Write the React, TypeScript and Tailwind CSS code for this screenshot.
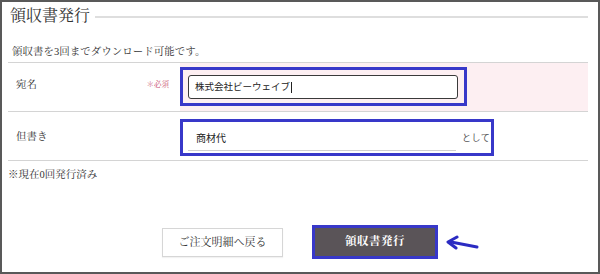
import React from "react";

const serif = { fontFamily: '"Liberation Serif", "Noto Serif CJK JP", "Noto Sans CJK JP", serif' };
const sans = { fontFamily: '"Noto Sans CJK JP", "Noto Sans", sans-serif' };

export default function App() {
  return (
    <div className="w-[600px] h-[274px] border-2 border-[#595959] bg-white pl-[6px] pr-[10px] text-[#333]" style={serif}>
      {/* title */}
      <div className="h-[28px] flex items-center">
        <div className="text-[16px] leading-[18px] pl-[2px] text-[#333] tracking-[0px]">領収書発行</div>
        <div className="flex-1 h-[2px] bg-[#dedede] ml-[5px] mt-[1px]" />
      </div>
      {/* description */}
      <div className="h-[33px] flex items-end pb-[2px] pl-[4px] border-b border-[#d4d4d4]">
        <span className="text-[10.5px] leading-[16px]">領収書を3回までダウンロード可能です。</span>
      </div>
      {/* row 1 */}
      <div className="h-[49px] flex border-b border-[#d4d4d4]">
        <div className="w-[172px] flex items-center justify-between pl-[8px] pr-[11px] pb-[4px]">
          <span className="text-[10.5px]">宛名</span>
          <span className="text-[7.5px] text-[#c9506f]">＊必須</span>
        </div>
        <div className="flex-1 bg-[#fdeff2] pt-[4px]">
          <div className="w-[287px] h-[39px] border-[3px] border-[#3838c9] pl-[5px] pr-[6px] pt-[5px]">
            <div className="h-[24px] border-[1.5px] border-[#3a3a3a] rounded-[3px] bg-white flex items-center pl-[6px]" style={sans}>
              <span className="text-[9.5px] text-[#222] leading-none">株式会社ビーウェイブ</span>
              <span className="w-[1px] h-[11px] bg-[#222] ml-[1px]" />
            </div>
          </div>
        </div>
      </div>
      {/* row 2 */}
      <div className="h-[49px] flex border-b border-[#d4d4d4]">
        <div className="w-[172px] flex items-center pl-[8px] pt-[2px]">
          <span className="text-[10.5px]">但書き</span>
        </div>
        <div className="flex-1 pt-[7px]">
          <div className="w-[314px] h-[37px] border-[3px] border-[#3838c9] pl-[5px] flex items-center" style={sans}>
            <div className="w-[268px] h-[25px] border-b border-[#cfcfcf] flex items-center pl-[8px] mt-[2px]">
              <span className="text-[10px] text-[#222] leading-none">商材代</span>
            </div>
            <span className="text-[9px] text-[#555] ml-[6px] tracking-[0.5px]">として</span>
          </div>
        </div>
      </div>
      {/* note */}
      <div className="mt-[6px] text-[10.5px] leading-[16px]">※現在0回発行済み</div>
      {/* buttons */}
      <div className="mt-[42px] flex justify-center items-center gap-[29px] pl-[4px]">
        <button className="w-[121px] h-[29px] border border-[#d6d6d6] bg-white text-[11px] text-[#333] shadow-[0_1px_1px_rgba(0,0,0,0.05)]" style={serif}>
          ご注文明細へ戻る
        </button>
        <div className="relative">
          <button className="w-[126px] h-[34px] border-[3px] border-[#3838c9] bg-[#5a5458] text-white text-[11.5px] font-bold tracking-[0.5px]" style={serif}>
            領収書発行
          </button>
          <svg className="absolute left-[134px] top-[10px]" width="34" height="16" viewBox="0 0 34 16">
            <line x1="5" y1="7" x2="31" y2="12" stroke="#2b2bc2" strokeWidth="3" strokeLinecap="round" />
            <polyline points="11,2 2,7 10,13" fill="none" stroke="#2b2bc2" strokeWidth="3" strokeLinecap="round" strokeLinejoin="round" />
          </svg>
        </div>
      </div>
    </div>
  );
}
